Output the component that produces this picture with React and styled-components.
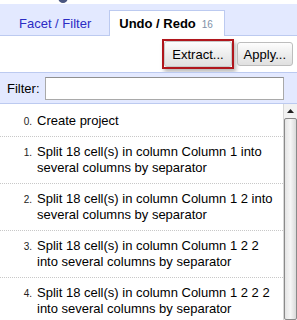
import React from "react";
import styled, { createGlobalStyle } from "styled-components";

const GlobalStyle = createGlobalStyle`
  html, body { margin: 0; padding: 0; background: #fff; overflow: hidden; }
  body { font-family: "Liberation Sans", Arial, sans-serif; font-size: 13px; color: #000; }
`;

const Page = styled.div`
  width: 297px;
  height: 320px;
  display: flex;
  flex-direction: column;
  overflow: hidden;
`;

const TopStrip = styled.div`
  height: 4px;
  display: flex;
  padding-left: 58px;
  overflow: hidden;
`;

const TabBar = styled.div`
  height: 32px;
  flex: none;
  box-sizing: border-box;
  background: #e3e9ff;
  border-bottom: 1px solid #bccaf0;
  display: flex;
  align-items: flex-end;
  padding-left: 4px;
`;

const Tab = styled.div`
  box-sizing: border-box;
  height: 26px;
  display: flex;
  align-items: center;
  gap: 6px;
  margin-bottom: -1px;
  padding: ${(p) => (p.$active ? "0 11px 0 9px" : "0 14px")};
  margin-right: ${(p) => (p.$active ? "0" : "3px")};
  background: ${(p) => (p.$active ? "#fff" : "transparent")};
  border: 1px solid ${(p) => (p.$active ? "#bccaf0" : "transparent")};
  border-bottom: none;
  color: ${(p) => (p.$active ? "#000" : "#2c2cc4")};
  font-weight: ${(p) => (p.$active ? "bold" : "normal")};
`;

const Count = styled.span`
  font-size: 10px;
  font-weight: normal;
  color: #8090a8;
  padding-top: 2px;
`;

const Toolbar = styled.div`
  height: 36px;
  flex: none;
  display: flex;
  justify-content: flex-end;
  align-items: center;
  gap: 3px;
  padding-right: 4px;
`;

const Highlight = styled.div`
  border: 2px solid #b0161c;
  box-shadow: 2px 3px 4px rgba(0, 0, 0, 0.28);
  display: flex;
`;

const Button = styled.button`
  font-family: "Liberation Sans", Arial, sans-serif;
  font-size: 13px;
  color: #000;
  height: ${(p) => (p.$big ? "26px" : "24px")};
  padding: 0 ${(p) => (p.$big ? "7px" : "6px")};
  border: 1px solid ${(p) => (p.$big ? "#c8c8c8" : "#bdbdbd")};
  border-radius: 3px;
  background: linear-gradient(#fdfdfd, #ececec 55%, #e0e0e0);
  cursor: pointer;
`;

const FilterBar = styled.div`
  height: 32px;
  flex: none;
  box-sizing: border-box;
  background: #e3e9ff;
  border-top: 1px solid #bccaf0;
  border-bottom: 1px solid #bccaf0;
  display: flex;
  align-items: center;
  padding: 0 13px 0 7px;
  gap: 5px;
`;

const FilterInput = styled.input`
  flex: 1;
  height: 23px;
  box-sizing: border-box;
  border: 1px solid #a9a9a9;
  border-top-color: #8f8f8f;
  background: #fff;
  margin: 0;
`;

const ListArea = styled.div`
  flex: 1;
  display: flex;
  min-height: 0;
`;

const List = styled.ol`
  flex: 1;
  margin: 0;
  padding: 2px 0 0 0;
  list-style: none;
  border-right: 1px solid #d8d8d8;
`;

const Item = styled.li`
  display: flex;
  align-items: baseline;
  padding: 7px 3px 7px 0;
  border-bottom: 1px dotted #c8c8c8;
`;

const Num = styled.span`
  width: 32px;
  flex: none;
  text-align: right;
  font-size: 10px;
  color: #222;
`;

const Desc = styled.span`
  margin-left: 5px;
  line-height: 16px;
`;

const Scrollbar = styled.div`
  width: 13px;
  flex: none;
  display: flex;
  flex-direction: column;
  background: #f0f0f0;
`;

const Arrow = styled.div`
  height: 14px;
  flex: none;
  display: flex;
  align-items: center;
  justify-content: center;
  background: #f2f2f2;
`;

const Thumb = styled.div`
  flex: 1;
  box-sizing: border-box;
  border: 1px solid #8a8a8a;
  border-radius: 2px;
  background: linear-gradient(to right, #e4e4e4, #f6f6f6 50%, #dadada);
`;

const items = [
  "Create project",
  "Split 18 cell(s) in column Column 1 into several columns by separator",
  "Split 18 cell(s) in column Column 1 2 into several columns by separator",
  "Split 18 cell(s) in column Column 1 2 2 into several columns by separator",
  "Split 18 cell(s) in column Column 1 2 2 2 into several columns by separator",
];

export default function App() {
  return (
    <>
      <GlobalStyle />
      <Page>
        <TopStrip>
          <svg width="10" height="4" viewBox="0 0 10 4">
            <ellipse cx="5" cy="-1" rx="4.5" ry="4" fill="#4a5680" />
          </svg>
        </TopStrip>
        <TabBar>
          <Tab>Facet / Filter</Tab>
          <Tab $active>
            Undo / Redo <Count>16</Count>
          </Tab>
        </TabBar>
        <Toolbar>
          <Highlight>
            <Button $big>Extract...</Button>
          </Highlight>
          <Button>Apply...</Button>
        </Toolbar>
        <FilterBar>
          <span>Filter:</span>
          <FilterInput />
        </FilterBar>
        <ListArea>
          <List>
            {items.map((t, i) => (
              <Item key={i}>
                <Num>{i}.</Num>
                <Desc>{t}</Desc>
              </Item>
            ))}
          </List>
          <Scrollbar>
            <Arrow>
              <svg width="7" height="4" viewBox="0 0 7 4">
                <path d="M0 4 L3.5 0 L7 4 Z" fill="#222" />
              </svg>
            </Arrow>
            <Thumb />
          </Scrollbar>
        </ListArea>
      </Page>
    </>
  );
}
